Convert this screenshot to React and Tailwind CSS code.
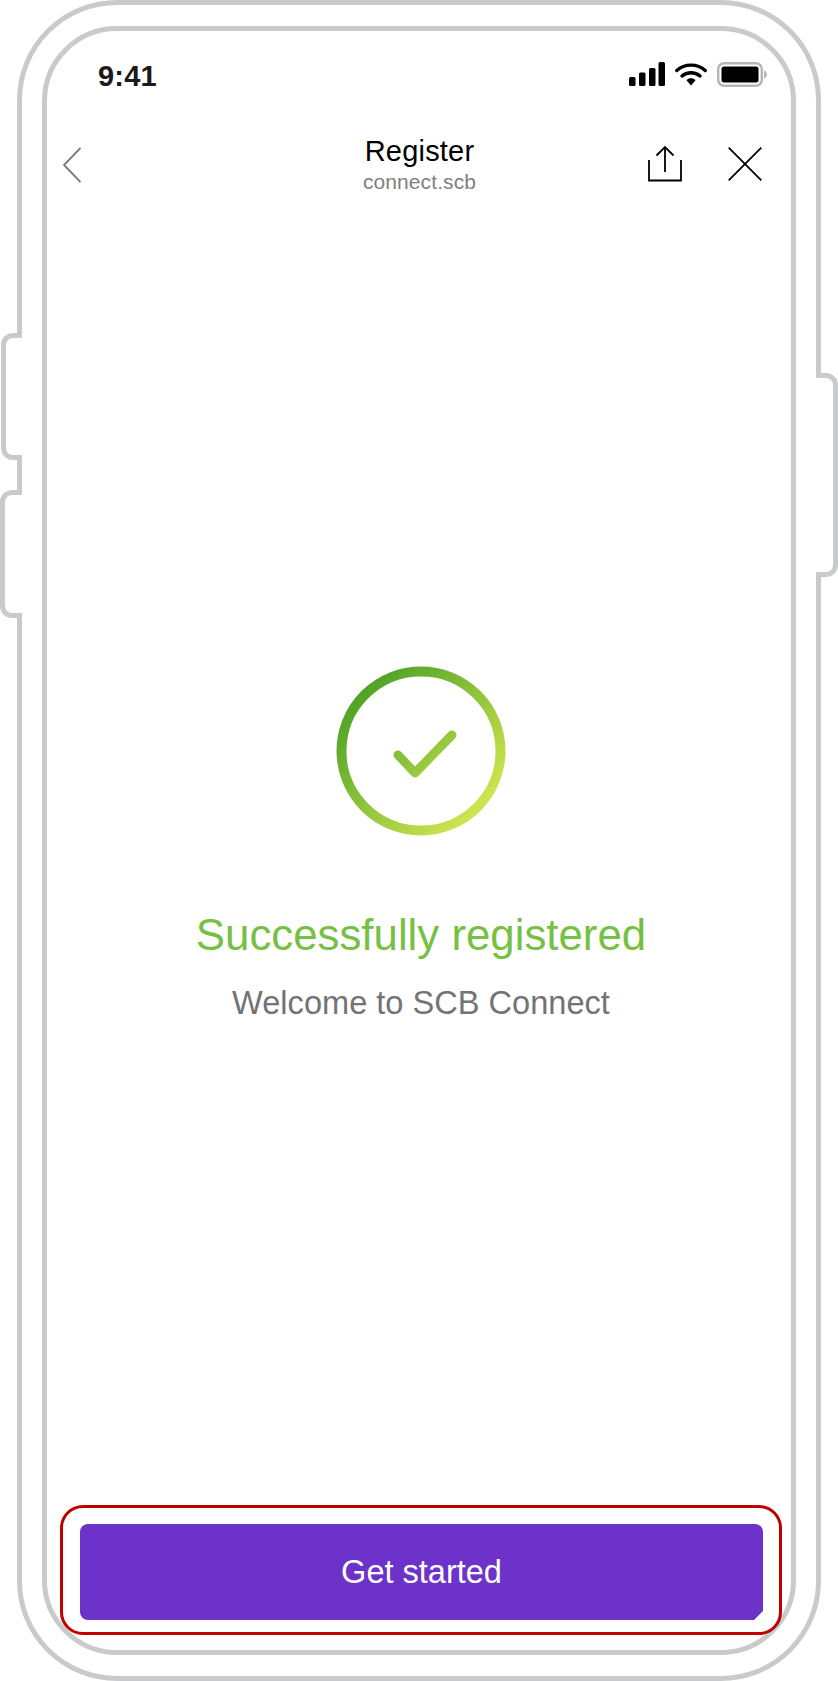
export default function App() {
  return (
    <div className="relative w-[838px] h-[1681px] overflow-hidden bg-white font-['Liberation_Sans',Arial,sans-serif]">
      {/* phone body */}
      <div className="mx-[17px] h-[1681px] border-[5px] border-[#c9cacc] rounded-[100px] px-[20px] py-[21px]">
        <div className="h-full border-[5px] border-[#c9cacc] rounded-[75px] flex flex-col">
          {/* status bar */}
          <div className="h-[79px] flex items-start justify-between pl-[51px] pr-[24px] pt-[28px]">
            <span className="text-[29px] leading-[34px] font-bold text-[#1a1a1a] tracking-[0.2px]">9:41</span>
            <div className="flex items-start gap-[9px] mt-[3px]">
              <svg width="37" height="24" viewBox="0 0 37 24" className="ml-[1px]">
                <rect x="0" y="15" width="6.5" height="9" rx="1.5" fill="#000" />
                <rect x="10" y="10.5" width="6.5" height="13.5" rx="1.5" fill="#000" />
                <rect x="20" y="6" width="6.5" height="18" rx="1.5" fill="#000" />
                <rect x="29.5" y="0" width="6.5" height="24" rx="1.5" fill="#000" />
              </svg>
              <svg width="32" height="23" viewBox="0 0 32 23" className="mt-[1px]">
                <path d="M1.8 7.5C9.5 .3 22.5 .3 30.2 7.5" fill="none" stroke="#000" strokeWidth="3.4" strokeLinecap="round" />
                <path d="M7 13C12 8.6 20 8.6 25 13" fill="none" stroke="#000" strokeWidth="3.4" strokeLinecap="round" />
                <path d="M11.5 17.2L16 22.5L20.5 17.2C18 14.6 14 14.6 11.5 17.2Z" fill="#000" />
              </svg>
              <svg width="50" height="25" viewBox="0 0 50 25" className="ml-[1px]">
                <rect x="1.2" y="1.2" width="43.6" height="22.6" rx="6" fill="none" stroke="#b5b5b5" strokeWidth="2.4" />
                <rect x="4.5" y="4.5" width="37" height="16" rx="2.5" fill="#000" />
                <path d="M47 8.5C49 9 49.8 10.7 49.8 12.5S49 16 47 16.5Z" fill="#b5b5b5" />
              </svg>
            </div>
          </div>
          {/* header */}
          <div className="h-[92px] grid grid-cols-[minmax(0,1fr)_auto_minmax(0,1fr)] items-start pl-[16px] pr-[15px]">
            <svg width="18" height="36" viewBox="0 0 18 36" className="mt-[37px]">
              <path d="M17.5 1L1 18L17.5 35" fill="none" stroke="#777" strokeWidth="1.8" />
            </svg>
            <div className="flex flex-col items-center mt-[24px]">
              <span className="text-[29px] leading-[34px] text-black tracking-[0.2px]">Register</span>
              <span className="mt-[2px] text-[21px] leading-[24px] text-[#808080] tracking-[0.1px]">connect.scb</span>
            </div>
            <div className="flex items-start justify-end gap-[46px] mt-[35px] mr-[14px]">
              <svg width="34" height="37" viewBox="0 0 34 37">
                <path d="M1 15V35.5H33V15" fill="none" stroke="#000" strokeWidth="1.8" />
                <path d="M17 27V2M8.5 10.5L17 2L25.5 10.5" fill="none" stroke="#000" strokeWidth="1.8" />
              </svg>
              <svg width="34" height="34" viewBox="0 0 34 34" className="mt-[2px]">
                <path d="M.7 .7L33.3 33.3M33.3 .7L.7 33.3" fill="none" stroke="#000" strokeWidth="1.8" />
              </svg>
            </div>
          </div>
          {/* success */}
          <main className="flex-1 flex flex-col items-center pl-[4px] pt-[464px]">
            <svg width="170" height="170" viewBox="0 0 170 170">
              <defs>
                <linearGradient id="g" gradientUnits="userSpaceOnUse" x1="25" y1="25" x2="145" y2="145">
                  <stop offset="0" stopColor="#4fa227" />
                  <stop offset="1" stopColor="#d0e650" />
                </linearGradient>
              </defs>
              <circle cx="85" cy="85" r="79.5" fill="none" stroke="url(#g)" strokeWidth="10" />
              <path d="M62 89L79 107L116 69" fill="none" stroke="url(#g)" strokeWidth="9" strokeLinecap="round" strokeLinejoin="round" />
            </svg>
            <h1 className="mt-[74px] text-[43.8px] leading-[50px] font-normal text-[#76c043]">Successfully registered</h1>
            <p className="mt-[24px] text-[32.6px] leading-[38px] text-[#737373]">Welcome to SCB Connect</p>
          </main>
          {/* action area */}
          <div className="relative z-10 ml-[13px] mr-[9px] mb-[15px] h-[130px] border-[3px] border-[#c00000] rounded-[23px] bg-white pl-[17px] pr-[16px] py-[16px]">
            <button className="w-full h-[96px] rounded-[8px] bg-[#6c32c9] text-white text-[32.5px] [clip-path:polygon(0_0,100%_0,100%_calc(100%-9px),calc(100%-9px)_100%,0_100%)]">
              Get started
            </button>
          </div>
        </div>
      </div>
      {/* side buttons */}
      <div className="absolute left-[1px] top-[333px] w-[21px] h-[127px] bg-white border-[5px] border-r-0 border-[#c9cacc] rounded-l-[12px]" />
      <div className="absolute left-[0px] top-[490px] w-[22px] h-[128px] bg-white border-[5px] border-r-0 border-[#c9cacc] rounded-l-[12px]" />
      <div className="absolute left-[816px] top-[373px] w-[22px] h-[204px] bg-white border-[5px] border-l-0 border-[#c9cacc] rounded-r-[12px]" />
    </div>
  );
}
